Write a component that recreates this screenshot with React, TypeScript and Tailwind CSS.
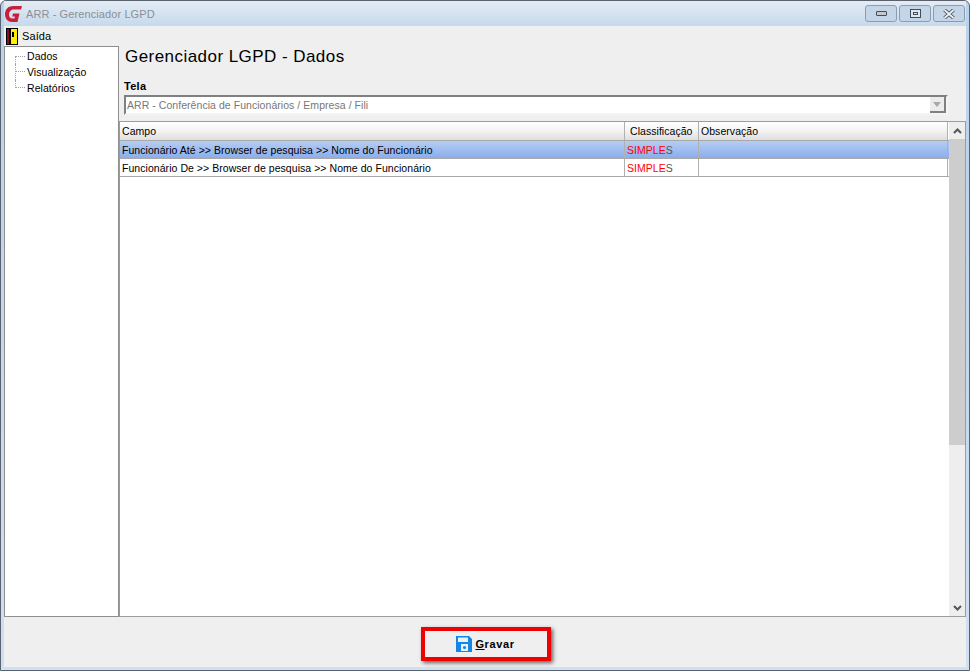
const tahoma = { fontFamily: '"Liberation Sans", Arial, sans-serif' };

const TreeItem = ({ label, pos }: { label: string; pos?: "first" | "last" }) => (
  <div className="flex h-4 items-center">
    <div
      className={`ml-[10px] mr-[2px] w-[10px] border-l border-dotted border-[#a0a0a0] ${
        pos === "first" ? "h-[8px] self-end" : pos === "last" ? "h-[8px] self-start" : "h-full"
      }`}
    >
      <div className={`border-t border-dotted border-[#a0a0a0] ${pos === "first" ? "" : "mt-[7px]"}`}></div>
    </div>
    <span className="text-[10.5px] leading-4 tracking-[0.05px] text-black">{label}</span>
  </div>
);

const WinButton = ({ children }: { children: React.ReactNode }) => (
  <div className="flex h-[17px] w-[32px] items-center justify-center rounded-[3px] border border-[#8c9bb5] bg-[#c3d5e6]">
    {children}
  </div>
);

const Row = ({ text, selected }: { text: string; selected?: boolean }) => (
  <div
    className={`flex h-[18px] border-b border-[#a8a8a8] text-[10.5px] leading-[19px] tracking-[0.05px] ${
      selected ? "bg-gradient-to-b from-[#b5cdf3] to-[#8badea]" : "bg-white"
    }`}
  >
    <div className="w-[505px] border-r border-[#b0b0b0] pl-[2px] text-black">{text}</div>
    <div className="w-[74px] border-r border-[#b0b0b0] pl-[2px] text-[#ff0000]">
      SIMPLE<span className="text-[#555555]">S</span>
    </div>
    <div className="w-[249px] border-r border-[#b0b0b0]"></div>
  </div>
);

const HeaderCell = ({ label, className }: { label: string; className: string }) => (
  <div
    className={`h-[18px] border-r border-[#b0b0b0] bg-gradient-to-b from-white via-[#f3f3f3] to-[#dedede] pl-[2px] text-[10.5px] leading-[19px] tracking-[0.05px] text-black ${className}`}
  >
    {label}
  </div>
);

export default function App() {
  return (
    <div
      className="flex h-[671px] w-[970px] flex-col overflow-hidden rounded-t-[6px] border border-[#5a6270] bg-gradient-to-b from-[#b9d1ea] to-[#cfe0f1] px-[3px] pb-[3px]"
      style={tahoma}
    >
      <div className="flex h-[25px] shrink-0 items-center bg-gradient-to-b from-[#e4ecf4] to-[#c6d9ec]">
        <svg viewBox="0 0 20 18" className="h-[18px] w-[20px]">
          <path
            d="M18 1 H9 C4 1 1 4.5 1 9.5 C1 14 4 17 8 17 H13.5 L15.5 8.5 H9 L8.2 11.5 H11 L10.4 13.6 H8.5 C6.2 13.6 5 12 5 9.7 C5 6.5 7 4.5 10 4.5 H17 Z"
            fill="#c8203c"
          />
        </svg>
        <span className="ml-[2px] mt-[2px] text-[11px] tracking-[0.1px] text-[#8a8f96]">ARR - Gerenciador LGPD</span>
        <div className="ml-auto mr-[1px] flex gap-[2px]">
          <WinButton>
            <span className="h-[5px] w-[11px] rounded-[1px] border border-[#444c58] bg-[#c4c8cc]"></span>
          </WinButton>
          <WinButton>
            <span className="flex h-[9px] w-[11px] items-center justify-center border border-[#444c58] bg-[#dfe6ee]">
              <span className="h-[3px] w-[5px] border border-[#444c58]"></span>
            </span>
          </WinButton>
          <WinButton>
            <svg viewBox="0 0 12 10" className="h-[10px] w-[12px]">
              <path d="M1.5 1 L10.5 9 M10.5 1 L1.5 9" stroke="#444c58" strokeWidth="3.6" />
              <path d="M1.5 1 L10.5 9 M10.5 1 L1.5 9" stroke="#eef1f4" strokeWidth="1.8" />
            </svg>
          </WinButton>
        </div>
      </div>

      <div className="flex min-h-0 flex-1 flex-col bg-[#efefef]">
        <div className="flex h-[20px] shrink-0 items-center">
          <svg viewBox="0 0 12 17" className="ml-[2px] h-[17px] w-[12px]">
            <rect x="0" y="0" width="12" height="17" fill="#000" />
            <rect x="5" y="1" width="6" height="15" fill="#ffee00" />
            <rect x="1" y="1" width="2" height="15" fill="#8a1020" />
            <rect x="6" y="4" width="2" height="5" fill="#000" />
          </svg>
          <span className="ml-[4px] text-[11px] tracking-[0.1px] text-black">Saída</span>
        </div>

        <div className="flex min-h-0 flex-1">
          <div className="h-full w-[115px] shrink-0 border border-[#8f8f8f] bg-white pt-px">
            <TreeItem label="Dados" pos="first" />
            <TreeItem label="Visualização" />
            <TreeItem label="Relatórios" pos="last" />
          </div>

          <div className="flex min-w-0 flex-1 flex-col">
            <h1 className="ml-[6px] mt-px h-[24px] text-[17px] leading-[20px] tracking-[0.45px] text-black">
              Gerenciador LGPD - Dados
            </h1>
            <div className="ml-[5px] mt-[8px] text-[11px] font-bold leading-[14px] tracking-[0.3px] text-black">Tela</div>
            <div className="ml-[5px] mt-[2px] flex h-[20px] w-[824px] items-center border-2 border-[#808080] border-r-[#f4f4f4] border-b-[#f4f4f4] bg-white">
              <span className="pl-[1px] pt-[2px] text-[10.5px] tracking-[0.05px] text-[#777777]">
                ARR - Conferência de Funcionários / Empresa / Fili
              </span>
              <div className="ml-auto flex h-full w-[16px] items-center justify-center border-b-2 border-r-2 border-[#808080] bg-[#ececec]">
                <span className="h-0 w-0 border-x-[4px] border-t-[5px] border-x-transparent border-t-[#a8a8a8]"></span>
              </div>
            </div>

            <div className="mt-[6px] flex min-h-0 flex-1 border border-[#9c9c9c] bg-white">
              <div className="min-w-0 flex-1">
                <div className="flex border-b border-[#a8a8a8]">
                  <HeaderCell label="Campo" className="w-[505px]" />
                  <HeaderCell label="Classificação" className="w-[74px] pl-[5px]" />
                  <HeaderCell label="Observação" className="w-[249px]" />
                </div>
                <Row text="Funcionário Até >> Browser de pesquisa >> Nome do Funcionário" selected />
                <Row text="Funcionário De >> Browser de pesquisa >> Nome do Funcionário" />
              </div>
              <div className="flex w-[16px] shrink-0 flex-col bg-[#eeeeee]">
                <div className="flex h-[17px] items-center justify-center">
                  <svg viewBox="0 0 9 6" className="h-[6px] w-[9px]">
                    <path d="M1 5 L4.5 1.5 L8 5" fill="none" stroke="#555555" strokeWidth="2" />
                  </svg>
                </div>
                <div className="h-[306px] bg-[#cdcdcd]"></div>
                <div className="mt-auto flex h-[17px] items-center justify-center">
                  <svg viewBox="0 0 9 6" className="h-[6px] w-[9px]">
                    <path d="M1 1 L4.5 4.5 L8 1" fill="none" stroke="#555555" strokeWidth="2" />
                  </svg>
                </div>
              </div>
            </div>
          </div>
        </div>

        <div className="flex h-[50px] shrink-0 items-start justify-center pt-[10px]">
          <div className="ml-px flex h-[34px] w-[130px] items-center justify-center gap-[3px] border-4 border-[#f00000] bg-[#efefef] shadow-[2px_2px_4px_rgba(0,0,0,0.6)]">
            <svg viewBox="0 0 16 16" className="h-[16px] w-[16px]">
              <path d="M0 0 H13 L16 3 V16 H0 Z" fill="#1487e4" />
              <rect x="2" y="1.5" width="10" height="4.5" fill="#e8f2fb" />
              <rect x="5" y="8" width="7" height="7" fill="#e8f2fb" />
              <circle cx="8.5" cy="11.5" r="1.6" fill="#1487e4" />
            </svg>
            <span className="text-[11px] font-bold tracking-[0.6px] text-black">
              <span className="underline">G</span>ravar
            </span>
          </div>
        </div>
      </div>
    </div>
  );
}
